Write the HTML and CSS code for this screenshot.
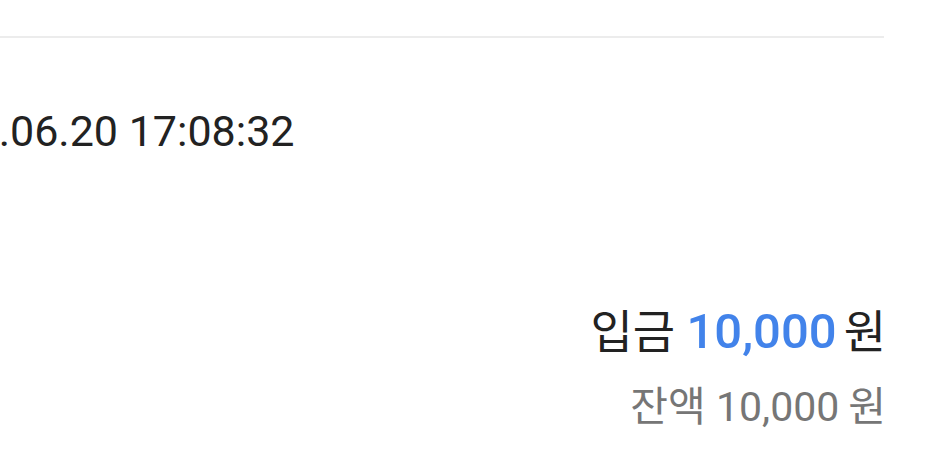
FILE: index.html
```html
<!DOCTYPE html>
<html lang="ko">
<head>
<meta charset="utf-8">
<link rel="stylesheet" href="styles.css">
</head>
<body>
<div class="page">
  <div class="divider"></div>
  <div class="item">
    <div class="date">2020.06.20 17:08:32</div>
    <div class="amounts">
      <div class="deposit"><span class="label">입금</span> <span class="value">10,000</span><span class="unit">원</span></div>
      <div class="balance"><span class="label">잔액</span> <span class="num">10,000</span><span class="unit">원</span></div>
    </div>
  </div>
</div>
</body>
</html>
```
FILE: styles.css
```css
html, body {
  margin: 0;
  padding: 0;
  background: #ffffff;
}
body {
  font-family: Roboto, "Noto Sans CJK KR", sans-serif;
  width: 947px;
  height: 464px;
  overflow: hidden;
}
.page {
  padding: 36px 63px 0 0;
}
.divider {
  height: 2px;
  background: #ececec;
}
.item {
  display: flex;
  flex-direction: column;
}
.date {
  margin-top: 67px;
  margin-left: -98px;
  font-size: 43px;
  line-height: 52px;
  color: #222222;
  white-space: nowrap;
}
.amounts {
  margin-top: 139px;
  margin-right: -2px;
  display: flex;
  flex-direction: column;
  align-items: flex-end;
}
.deposit {
  font-size: 46px;
  line-height: 64px;
  color: #222222;
}
.deposit .value {
  color: #4283ea;
  font-weight: 500;
  font-size: 49px;
}
.deposit .unit {
  margin-left: 7px;
}
.balance {
  margin-top: 12px;
  font-size: 41px;
  line-height: 54px;
  color: #767676;
}
.balance .num {
  font-size: 41px;
}
.balance .unit {
  margin-left: 9px;
}
.label, .unit {
  font-family: "Noto Sans CJK KR", sans-serif;
}
```
